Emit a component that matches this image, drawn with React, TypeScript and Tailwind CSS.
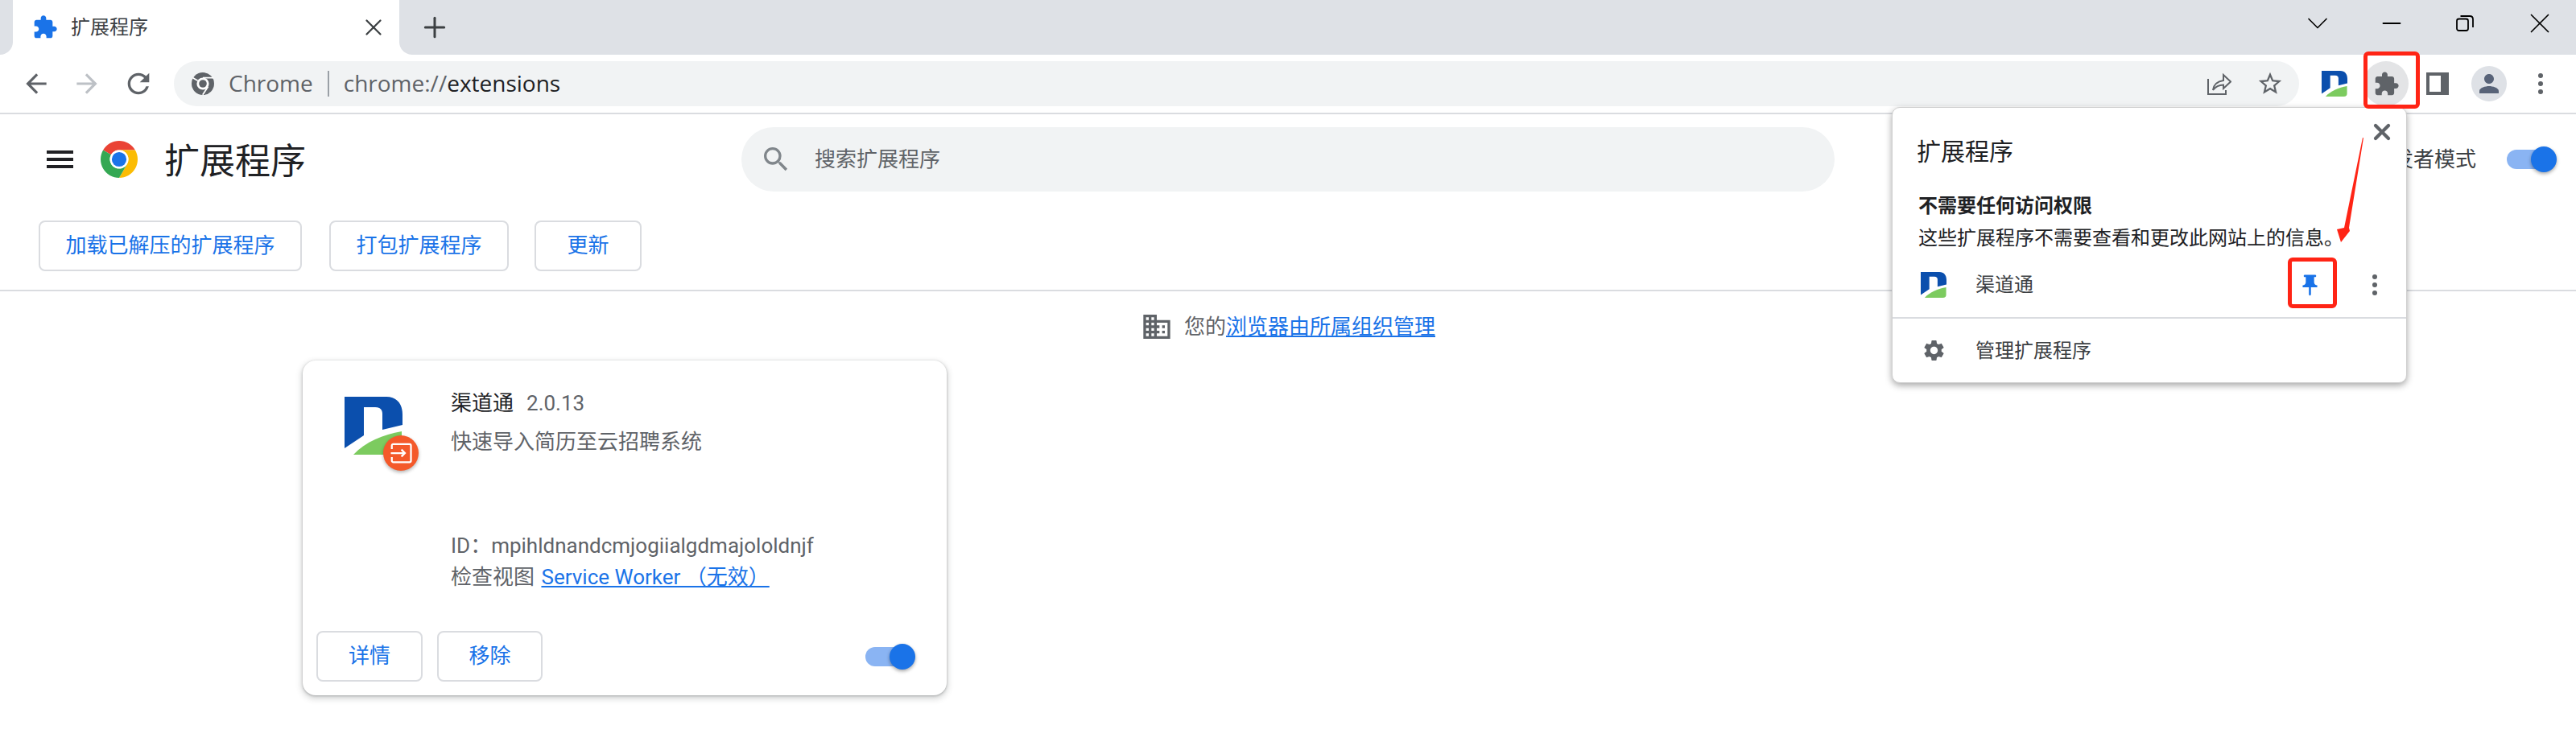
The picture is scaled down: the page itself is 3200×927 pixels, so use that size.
import type { ReactNode } from "react";
import { Plus, X, ChevronDown, Minus } from "lucide-react";

const EXTENSION_PATH =
  "M20.5 11H19V7c0-1.1-.9-2-2-2h-4V3.5C13 2.12 11.88 1 10.5 1S8 2.12 8 3.5V5H4c-1.1 0-1.99.9-1.99 2v3.8H3.5c1.49 0 2.7 1.21 2.7 2.7s-1.21 2.7-2.7 2.7H2V20c0 1.1.9 2 2 2h3.8v-1.5c0-1.49 1.21-2.7 2.7-2.7 1.49 0 2.7 1.21 2.7 2.7V22H17c1.1 0 2-.9 2-2v-4h1.5c1.38 0 2.5-1.12 2.5-2.5S21.88 11 20.5 11z";

function MaterialIcon({ d, className }: { d: string; className: string }) {
  return (
    <svg viewBox="0 0 24 24" className={className} fill="currentColor">
      <path d={d} />
    </svg>
  );
}

function ChromeLogo({ className }: { className: string }) {
  return (
    <svg viewBox="0 0 48 48" className={className}>
      <path fill="#ea4335" d="M3.22 12A24 24 0 0 1 44.78 12H24A12 12 0 0 0 13.61 18Z" />
      <path fill="#fbbc04" d="M44.78 12A24 24 0 0 1 24 48L34.39 30A12 12 0 0 0 24 12Z" />
      <path fill="#34a853" d="M24 48A24 24 0 0 1 3.22 12L13.61 18A12 12 0 0 0 34.39 30Z" />
      <circle cx="24" cy="24" r="12" fill="#fff" />
      <circle cx="24" cy="24" r="9.5" fill="#1a73e8" />
    </svg>
  );
}

// grey site icon in the address bar
function ChromeMono({ className }: { className: string }) {
  return (
    <svg viewBox="0 0 28 28" className={className}>
      <circle cx="14" cy="14" r="14" fill="#5f6368" />
      <circle cx="14" cy="14" r="7.6" fill="#fff" />
      <circle cx="14" cy="14" r="4.8" fill="#5f6368" />
      <path fill="none" stroke="#fff" strokeWidth="1.8" d="M14 6.6H27M7.6 10.3L1.6 6.8M20.4 17.7L13.8 27.8" />
    </svg>
  );
}

function DLogo({ className }: { className: string }) {
  return (
    <svg viewBox="0 0 72 72" className={className}>
      <path fill="#0b4fad" d="M0 0H52C65 0 72 9 72 22V35L47 41V21C47 16 44 13 38 13H24V48L0 64Z" />
      <path fill="#7ccb5f" d="M11 72C26 56 48 47 71 43V64C71 69 68 72 62 72Z" />
    </svg>
  );
}

function Dots() {
  return (
    <div className="flex flex-col gap-[4px]">
      <span className="h-[6px] w-[6px] rounded-full bg-[#5f6368]" />
      <span className="h-[6px] w-[6px] rounded-full bg-[#5f6368]" />
      <span className="h-[6px] w-[6px] rounded-full bg-[#5f6368]" />
    </div>
  );
}

function Toggle() {
  return (
    <div className="flex h-[24px] w-[56px] items-center justify-end rounded-full bg-[#8ab4f3]">
      <div className="-mr-[6px] h-[32px] w-[32px] shrink-0 rounded-full bg-[#1a73e8] shadow-[0_2px_4px_rgba(0,0,0,0.35)]" />
    </div>
  );
}

function OutlineButton({ className, children }: { className: string; children: ReactNode }) {
  return (
    <button className={`flex h-[63px] items-center justify-center rounded-[8px] border-2 border-[#dadce0] bg-white text-[26px] text-[#1a73e8] ${className}`}>
      {children}
    </button>
  );
}

function TabStrip() {
  return (
    <div className="flex h-[68px] bg-white">
      <div className="w-[16px] rounded-br-[16px] bg-[#dee1e6]" />
      <div className="flex w-[480px] items-center rounded-t-[16px] bg-white pl-[24px]">
        <MaterialIcon d={EXTENSION_PATH} className="h-[32px] w-[32px] text-[#1a73e8]" />
        <span className="ml-[16px] text-[24px] text-[#3c4043]">扩展程序</span>
        <X className="ml-auto mr-[15px] h-[34px] w-[34px] text-[#3c4043]" strokeWidth={1.6} />
      </div>
      <div className="flex flex-1 items-center rounded-bl-[16px] bg-[#dee1e6]">
        <Plus className="ml-[24px] h-[40px] w-[40px] text-[#3c4043]" strokeWidth={1.8} />
        <div className="ml-auto mb-[10px] flex items-center pr-[24px] text-black">
          <ChevronDown className="h-[44px] w-[44px]" strokeWidth={0.9} />
          <Minus className="ml-[52px] h-[36px] w-[36px]" strokeWidth={1.2} />
          <svg viewBox="0 0 22 20" className="ml-[62px] h-[20px] w-[22px]" fill="none" stroke="currentColor" strokeWidth="1.8">
            <rect x="1" y="4.5" width="14" height="14.5" rx="2.5" />
            <path d="M5.5 1H17C19.4 1 21 2.6 21 5V15" />
          </svg>
          <X className="ml-[61px] h-[42px] w-[42px]" strokeWidth={1} />
        </div>
      </div>
    </div>
  );
}

function Toolbar() {
  return (
    <div className="flex h-[74px] items-center border-b-2 border-[#dadce0] bg-white text-[#5f6368]">
      <MaterialIcon d="M20 11H7.83l5.59-5.59L12 4l-8 8 8 8 1.41-1.41L7.83 13H20v-2z" className="ml-[26px] h-[38px] w-[38px]" />
      <MaterialIcon d="M12 4l-1.41 1.41L16.17 11H4v2h12.17l-5.58 5.59L12 20l8-8z" className="ml-[25px] h-[38px] w-[38px] text-[#bdc1c6]" />
      <MaterialIcon d="M17.65 6.35A7.958 7.958 0 0012 4c-4.42 0-7.99 3.58-7.99 8s3.57 8 7.99 8c3.73 0 6.84-2.55 7.73-6h-2.08A5.99 5.99 0 0112 18c-3.31 0-6-2.69-6-6s2.69-6 6-6c1.66 0 3.14.69 4.22 1.78L13 11h7V4l-2.35 2.35z" className="ml-[25px] h-[40px] w-[40px]" />
      <div className="ml-[24px] flex h-[56px] w-[2640px] items-center rounded-full bg-[#f1f3f4] pl-[22px] font-['Open_Sans','Noto_Sans_CJK_SC',sans-serif] text-[28px]">
        <ChromeMono className="h-[28px] w-[28px]" />
        <span className="ml-[18px] pb-[3px]">Chrome</span>
        <span className="ml-[18px] h-[32px] w-[2px] bg-[#9aa0a6]" />
        <span className="ml-[18px] pb-[3px]">chrome://<span className="text-[#202124]">extensions</span></span>
        <svg viewBox="0 0 30 28" className="ml-auto h-[28px] w-[30px]" fill="none" stroke="currentColor" strokeWidth="2">
          <path d="M1 8V27H23V22" />
          <path d="M7 22C8 15 13 11 20 10V3L29 11.5L20 20V15.5C14 15.5 10 18 7 22Z" />
        </svg>
        <MaterialIcon d="M22 9.24l-7.19-.62L12 2 9.19 8.63 2 9.24l5.46 4.73L5.82 21 12 17.27 18.18 21l-1.63-7.03L22 9.24zM12 15.4l-3.76 2.27 1-4.28-3.32-2.88 4.38-.38L12 6.1l1.71 4.04 4.38.38-3.32 2.88 1 4.28L12 15.4z" className="ml-[31px] mr-[19px] h-[34px] w-[34px]" />
      </div>
      <DLogo className="ml-[28px] h-[32px] w-[32px]" />
      <div className="ml-[20px] flex h-[56px] w-[56px] items-center justify-center rounded-full bg-[#e3e4e6]">
        <MaterialIcon d={EXTENSION_PATH} className="h-[33px] w-[33px]" />
      </div>
      <div className="ml-[22px] flex h-[28px] w-[28px] bg-[#5f6368] py-[4px] pl-[4px] pr-[10px]">
        <div className="flex-1 bg-white" />
      </div>
      <div className="ml-[28px] flex h-[44px] w-[44px] items-center justify-center rounded-full bg-[#dee1e6]">
        <MaterialIcon d="M12 12c2.21 0 4-1.79 4-4s-1.79-4-4-4-4 1.79-4 4 1.79 4 4 4zm0 2c-2.67 0-8 1.34-8 4v2h16v-2c0-2.66-5.33-4-8-4z" className="h-[36px] w-[36px] text-[#586378]" />
      </div>
      <div className="ml-[39px]">
        <Dots />
      </div>
    </div>
  );
}

function PageHeader() {
  return (
    <div className="h-[220px] border-b-2 border-[#dadce0]">
      <div className="flex h-[112px] items-center">
        <div className="flex w-[921px] items-center pl-[58px]">
          <div className="flex w-[33px] flex-col gap-[5px]">
            <span className="h-[4px] bg-[#202124]" />
            <span className="h-[4px] bg-[#202124]" />
            <span className="h-[4px] bg-[#202124]" />
          </div>
          <ChromeLogo className="ml-[34px] h-[46px] w-[46px]" />
          <span className="ml-[33px] mt-[5px] text-[44px] text-[#202124]">扩展程序</span>
        </div>
        <div className="flex h-[80px] w-[1358px] items-center rounded-full bg-[#f1f3f4] pl-[23px] text-[26px] text-[#5f6368]">
          <MaterialIcon d="M15.5 14h-.79l-.28-.27A6.471 6.471 0 0016 9.5 6.5 6.5 0 109.5 16c1.61 0 3.09-.59 4.23-1.57l.27.28v.79l5 4.99L20.49 19l-4.99-5zm-6 0C7.01 14 5 11.99 5 9.5S7.01 5 9.5 5 14 7.01 14 9.5 11.99 14 9.5 14z" className="h-[40px] w-[40px] text-[#80868b]" />
          <span className="ml-[28px]">搜索扩展程序</span>
        </div>
        <div className="flex flex-1 items-center justify-end pr-[30px]">
          <span className="text-[26px] text-[#3c4043]">开发者模式</span>
          <div className="ml-[38px]">
            <Toggle />
          </div>
        </div>
      </div>
      <div className="mt-[20px] flex pl-[48px]">
        <OutlineButton className="w-[327px]">加载已解压的扩展程序</OutlineButton>
        <OutlineButton className="ml-[34px] w-[223px]">打包扩展程序</OutlineButton>
        <OutlineButton className="ml-[32px] w-[133px]">更新</OutlineButton>
      </div>
    </div>
  );
}

function ExtensionCard() {
  return (
    <div className="ml-[376px] mt-[27px] flex h-[416px] w-[800px] flex-col rounded-[16px] bg-white shadow-[0_3px_7px_2px_rgba(60,64,67,0.18),0_1px_3px_rgba(60,64,67,0.35)]">
      <div className="flex flex-1 pl-[52px] pt-[37px]">
        <div className="relative mt-[8px] h-[72px] w-[72px]">
          <DLogo className="h-[72px] w-[72px]" />
          <div className="absolute left-[48px] top-[48px] flex h-[44px] w-[44px] items-center justify-center rounded-full bg-[#f4592a] shadow-[0_2px_4px_rgba(0,0,0,0.3)]">
            <svg viewBox="0 0 24 24" className="h-[30px] w-[30px]" fill="none" stroke="#fff" strokeWidth="1.8">
              <path d="M3 8V4.5C3 3.7 3.7 3 4.5 3H20.5C21.3 3 22 3.7 22 4.5V19.5C22 20.3 21.3 21 20.5 21H4.5C3.7 21 3 20.3 3 19.5V16" />
              <path d="M2 12H16M12.5 8.5L16 12L12.5 15.5" />
            </svg>
          </div>
        </div>
        <div className="ml-[60px] text-[26px] leading-[32px] text-[#5f6368]">
          <div className="h-[32px]">
            <span className="text-[#202124]">渠道通</span>
            <span className="ml-[16px]">2.0.13</span>
          </div>
          <div className="mt-[16px] h-[32px]">快速导入简历至云招聘系统</div>
          <div className="mt-[97px] h-[32px]">ID：mpihldnandcmjogiialgdmajololdnjf</div>
          <div className="mt-[7px] h-[32px]">
            检查视图 <span className="ml-[2px] text-[#1a73e8] underline">Service Worker （无效）</span>
          </div>
        </div>
      </div>
      <div className="flex items-center pb-[17px] pl-[17px] pr-[45px]">
        <OutlineButton className="w-[132px]">详情</OutlineButton>
        <OutlineButton className="ml-[18px] w-[131px]">移除</OutlineButton>
        <div className="ml-auto">
          <Toggle />
        </div>
      </div>
    </div>
  );
}

function ExtensionsPopup() {
  return (
    <div className="absolute right-[210px] top-[133px] flex h-[343px] w-[640px] flex-col rounded-[10px] border border-[#d0d0d0] bg-white text-[24px] text-[#202124] shadow-[0_3px_8px_rgba(0,0,0,0.35)]">
      <X className="absolute right-[14px] top-[14px] h-[32px] w-[32px] text-[#5f6368]" strokeWidth={3.2} />
      <div className="pl-[30px] pt-[35px] text-[30px] leading-[40px]">扩展程序</div>
      <div className="mt-[31px] pl-[32px] font-bold leading-[32px]">不需要任何访问权限</div>
      <div className="mt-[8px] pl-[32px] leading-[32px]">这些扩展程序不需要查看和更改此网站上的信息。</div>
      <div className="mt-[5px] flex h-[79px] items-center border-b-2 border-[#dadce0] pb-[3px] pl-[35px]">
        <DLogo className="h-[32px] w-[32px]" />
        <span className="ml-[36px] text-[#3c4043]">渠道通</span>
        <MaterialIcon d="M16 9V4h1c.55 0 1-.45 1-1s-.45-1-1-1H7c-.55 0-1 .45-1 1s.45 1 1 1h1v5c0 1.66-1.34 3-3 3v2h5.97v7l1 1 1-1v-7H19v-2c-1.66 0-3-1.34-3-3z" className="ml-auto mr-[62px] h-[31px] w-[31px] text-[#1a73e8]" />
        <div className="mr-[36px]">
          <Dots />
        </div>
      </div>
      <div className="flex flex-1 items-center pl-[36px]">
        <MaterialIcon d="M19.14 12.94c.04-.3.06-.61.06-.94 0-.32-.02-.64-.07-.94l2.03-1.58c.18-.14.23-.41.12-.61l-1.92-3.32c-.12-.22-.37-.29-.59-.22l-2.39.96c-.5-.38-1.03-.7-1.62-.94l-.36-2.54c-.04-.24-.24-.41-.48-.41h-3.84c-.24 0-.43.17-.47.41l-.36 2.54c-.59.24-1.13.57-1.62.94l-2.39-.96c-.22-.08-.47 0-.59.22L2.74 8.87c-.12.21-.08.47.12.61l2.03 1.58c-.05.3-.09.63-.09.94s.02.64.07.94l-2.03 1.58c-.18.14-.23.41-.12.61l1.92 3.32c.12.22.37.29.59.22l2.39-.96c.5.38 1.03.7 1.62.94l.36 2.54c.05.24.24.41.48.41h3.84c.24 0 .44-.17.47-.41l.36-2.54c.59-.24 1.13-.56 1.62-.94l2.39.96c.22.08.47 0 .59-.22l1.92-3.32c.12-.22.07-.47-.12-.61l-2.01-1.58zM12 15.6c-1.98 0-3.6-1.62-3.6-3.6s1.62-3.6 3.6-3.6 3.6 1.62 3.6 3.6-1.62 3.6-3.6 3.6z" className="h-[31px] w-[31px] text-[#5f6368]" />
        <span className="ml-[36px] text-[#3c4043]">管理扩展程序</span>
      </div>
    </div>
  );
}

export default function App() {
  return (
    <div className="relative h-screen overflow-hidden bg-white font-['Roboto','Noto_Sans_CJK_SC',sans-serif]">
      <TabStrip />
      <Toolbar />
      <PageHeader />
      <div className="mt-[29px] flex h-[30px] items-center justify-center text-[26px] text-[#5f6368]">
        <MaterialIcon d="M12 7V3H2v18h20V7H12zM6 19H4v-2h2v2zm0-4H4v-2h2v2zm0-4H4V9h2v2zm0-4H4V5h2v2zm4 12H8v-2h2v2zm0-4H8v-2h2v2zm0-4H8V9h2v2zm0-4H8V5h2v2zm10 12h-8v-2h2v-2h-2v-2h2v-2h-2V9h8v10zm-2-8h-2v2h2v-2zm0 4h-2v2h2v-2z" className="h-[40px] w-[40px]" />
        <span className="ml-[14px]">您的<span className="text-[#1a73e8] underline">浏览器由所属组织管理</span></span>
      </div>
      <ExtensionCard />
      <ExtensionsPopup />
      {/* red annotations drawn over the screenshot */}
      <div className="absolute left-[2936px] top-[64px] h-[71px] w-[70px] rounded-[6px] border-[5px] border-[#ff2415]" />
      <div className="absolute left-[2842px] top-[320px] h-[63px] w-[61px] rounded-[6px] border-[5px] border-[#ff2415]" />
      <svg viewBox="0 0 40 140" className="absolute left-[2900px] top-[168px] h-[140px] w-[40px]">
        <path fill="#ff2415" d="M35 3L36 3.5L18 115L19 119L8 133L3 117L12 115Z" />
      </svg>
    </div>
  );
}
